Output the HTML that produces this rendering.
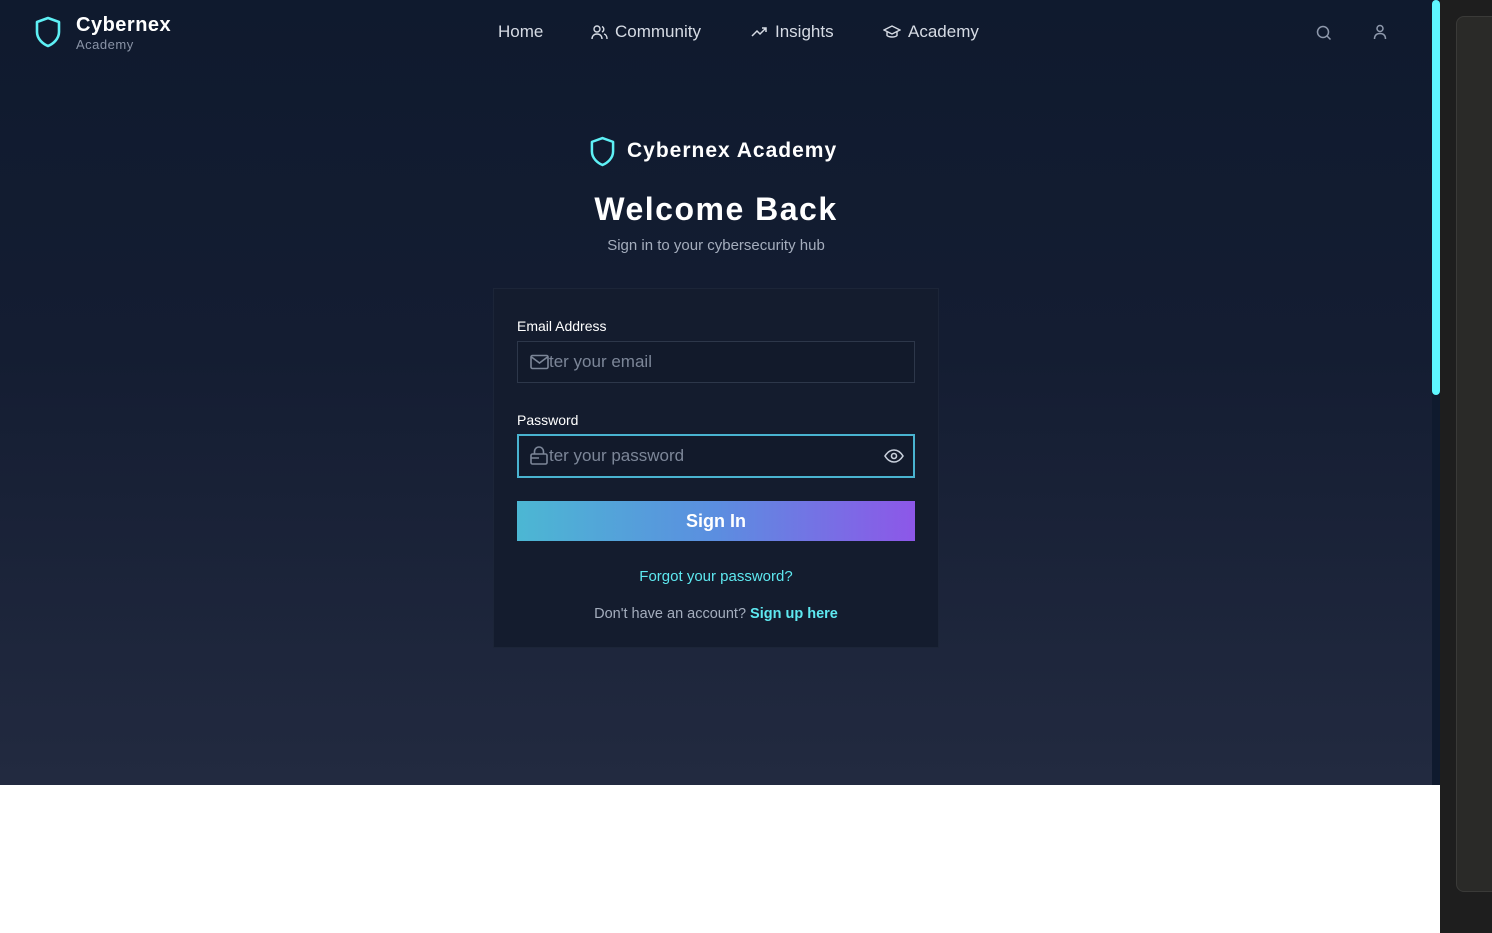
<!DOCTYPE html>
<html><head><meta charset="utf-8"><style>
*{box-sizing:border-box;margin:0;padding:0}
html,body{width:1492px;height:933px;overflow:hidden;background:#fff;font-family:"Liberation Sans",sans-serif}
#main{position:absolute;left:0;top:0;width:1432px;height:785px;background:linear-gradient(#0f1a2e 0%,#141d32 45%,#222a40 100%)}
#sb{position:absolute;left:1432px;top:0;width:8px;height:785px;background:#0f1a2e}
#thumb{position:absolute;left:1432px;top:0;width:8px;height:395px;background:#5ef6ff;border-radius:4px}
#white{position:absolute;left:0;top:785px;width:1440px;height:148px;background:#fff}
#rp{position:absolute;left:1440px;top:0;width:52px;height:933px;background:#1e1e1e}
#rp .in{position:absolute;left:16px;top:16px;width:60px;height:876px;background:#2a2a28;border:1px solid #3a3a38;border-radius:8px}
.brand{font-weight:bold;color:#fff;letter-spacing:.5px}
.nav{position:absolute;top:22px;color:#d6dbe4;font-size:17px;display:flex;align-items:center;gap:7px}
svg{display:block}
.card{position:absolute;left:493px;top:288px;width:446px;height:360px;background:#141c2e;border:1px solid #1c2538}
.lbl{position:absolute;left:23px;color:#fff;font-size:14px}
.inp{position:absolute;left:23px;width:398px;height:42px;border:1px solid #2d374a;background:#121a2b;color:#7c8698;font-size:17px}
.inp span{position:absolute;left:31px;top:10px}
.inp svg{position:absolute;left:12px;top:12px}
</style></head><body>
<div id="main">
 <svg style="position:absolute;left:35px;top:16px" width="26" height="32" viewBox="0 0 26 32"><path d="M13 2 L24 6 V16 C24 23 18 28 13 30 C8 28 2 23 2 16 V6 Z" fill="none" stroke="#5ef0f5" stroke-width="2.6" stroke-linejoin="round"/></svg>
 <div class="brand" style="position:absolute;left:76px;top:14px;font-size:20px">Cybernex</div>
 <div style="position:absolute;left:76px;top:37px;font-size:13px;color:#8a93a6;letter-spacing:.5px">Academy</div>
 <div class="nav" style="left:498px">Home</div>
 <div class="nav" style="left:591px"><svg width="17" height="15" viewBox="0 0 17 15" fill="none" stroke="#d6dbe4" stroke-width="1.4"><circle cx="6" cy="4" r="3"/><path d="M1 14c0-3 2-5 5-5s5 2 5 5M11 1.5a3 3 0 010 5.5M13 9c2 .5 3 2.5 3 5"/></svg>Community</div>
 <div class="nav" style="left:751px"><svg width="17" height="12" viewBox="0 0 17 12" fill="none" stroke="#d6dbe4" stroke-width="1.5"><path d="M1 10l5-5 3 3 6-6M11 2h4v4"/></svg>Insights</div>
 <div class="nav" style="left:883px"><svg width="18" height="14" viewBox="0 0 18 14" fill="none" stroke="#d6dbe4" stroke-width="1.4"><path d="M1 5l8-4 8 4-8 4z M4 7v3.5c2 2 8 2 10 0V7"/></svg>Academy</div>
 <svg style="position:absolute;left:1316px;top:25px" width="16" height="16" viewBox="0 0 16 16" fill="none" stroke="#8f99ac" stroke-width="1.5"><circle cx="7" cy="7" r="5.5"/><path d="M11 11l3.5 3.5"/></svg>
 <svg style="position:absolute;left:1373px;top:24px" width="14" height="16" viewBox="0 0 14 16" fill="none" stroke="#8f99ac" stroke-width="1.5"><circle cx="7" cy="4.5" r="3"/><path d="M1.5 15c0-4 2.5-5.5 5.5-5.5s5.5 1.5 5.5 5.5"/></svg>

 <svg style="position:absolute;left:590px;top:136px" width="25" height="31" viewBox="0 0 26 32"><path d="M13 2 L24 6 V16 C24 23 18 28 13 30 C8 28 2 23 2 16 V6 Z" fill="none" stroke="#5ef0f5" stroke-width="2.6" stroke-linejoin="round"/></svg>
 <div class="brand" style="position:absolute;left:627px;top:139px;font-size:21px;letter-spacing:1px">Cybernex Academy</div>
 <div class="brand" style="position:absolute;left:0;width:1432px;text-align:center;top:191px;font-size:32px;letter-spacing:1.5px">Welcome Back</div>
 <div style="position:absolute;left:0;width:1432px;text-align:center;top:237px;font-size:15px;color:#a4adbd">Sign in to your cybersecurity hub</div>

 <div class="card">
  <div class="lbl" style="top:29px">Email Address</div>
  <div class="inp" style="top:52px"><svg width="19" height="16" viewBox="0 0 19 16" fill="none" stroke="#7c8698" stroke-width="1.6"><rect x="1" y="1.5" width="17" height="13" rx="1.5"/><path d="M1.5 3l8 6 8-6"/></svg><span>ter your email</span></div>
  <div class="lbl" style="top:123px">Password</div>
  <div class="inp" style="top:145px;height:44px;border:2px solid #49b3d0"><svg width="18" height="19" viewBox="0 0 18 19" fill="none" stroke="#7c8698" stroke-width="1.6" style="top:10px;left:11px"><rect x="1" y="8" width="16" height="10" rx="1.5"/><path d="M4.5 8V5.5a4.5 4.5 0 019 0V8M1 12h8"/></svg><span style="left:30px;top:10px">ter your password</span>
   <svg width="20" height="14" viewBox="0 0 20 14" fill="none" stroke="#c8cfdb" stroke-width="1.6" style="left:365px;top:13px"><path d="M1 7c2.5-4 5.5-6 9-6s6.5 2 9 6c-2.5 4-5.5 6-9 6s-6.5-2-9-6z"/><circle cx="10" cy="7" r="2.5"/></svg></div>
  <div style="position:absolute;left:23px;top:212px;width:398px;height:40px;background:linear-gradient(90deg,#4cb7d3,#5b8ee0 50%,#8d57e8);color:#fff;font-size:18px;font-weight:bold;text-align:center;line-height:40px">Sign In</div>
  <div style="position:absolute;left:0;width:444px;text-align:center;top:279px;font-size:15px;color:#5ee8f0">Forgot your password?</div>
  <div style="position:absolute;left:0;width:444px;text-align:center;top:317px;font-size:14.5px;color:#a4adbd">Don't have an account? <b style="color:#5ee8f0">Sign up here</b></div>
 </div>
</div>
<div id="sb"></div><div id="thumb"></div>
<div id="white"></div>
<div id="rp"><div class="in"></div></div>
</body></html>
